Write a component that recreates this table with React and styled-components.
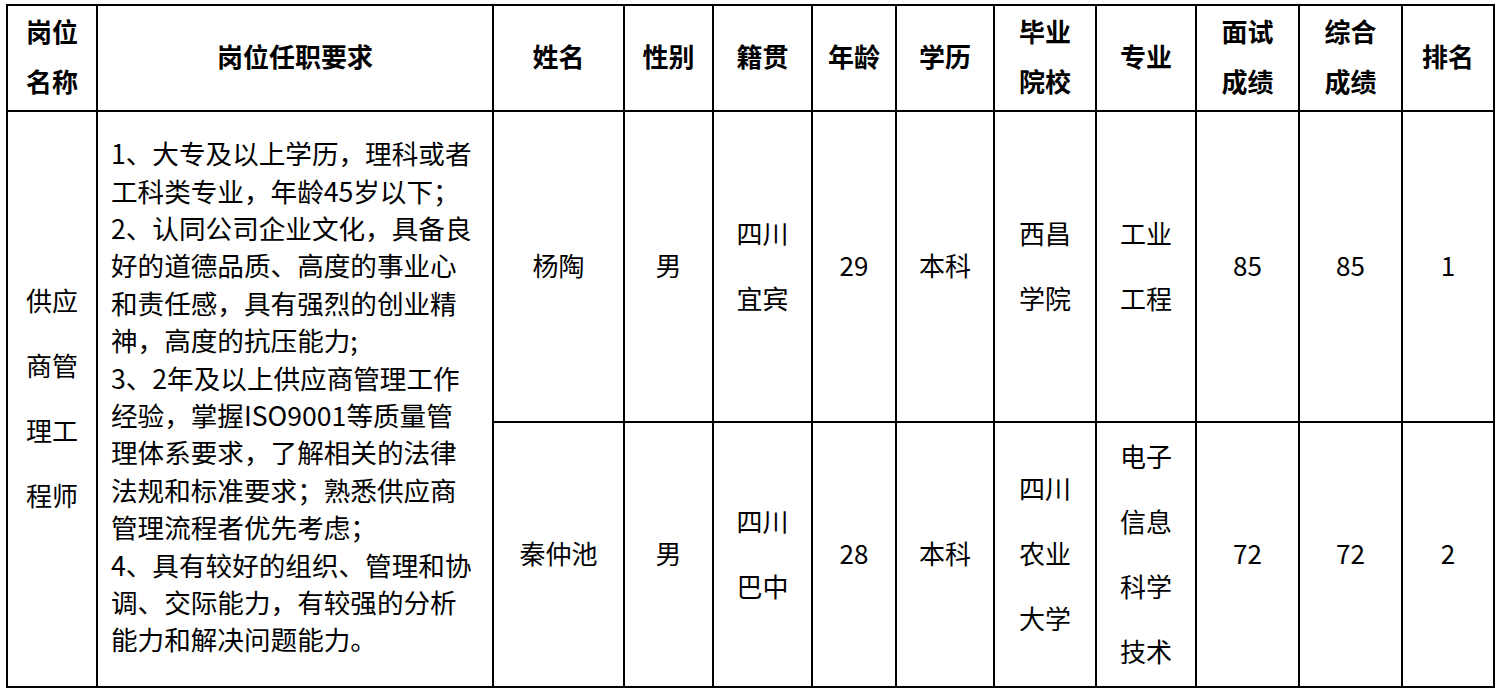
import styled, { createGlobalStyle } from "styled-components";

const GlobalStyle = createGlobalStyle`
  body {
    margin: 0;
    background: #fff;
    color: #000;
    font-family: "Noto Sans CJK SC", "Microsoft YaHei", sans-serif;
  }
`;

const columns = [88, 394, 129, 87, 97, 82, 96, 100, 98, 101, 101, 90];

const headers = [
  ["岗位", "名称"],
  ["岗位任职要求"],
  ["姓名"],
  ["性别"],
  ["籍贯"],
  ["年龄"],
  ["学历"],
  ["毕业", "院校"],
  ["专业"],
  ["面试", "成绩"],
  ["综合", "成绩"],
  ["排名"],
];

const requirements = [
  "1、大专及以上学历，理科或者",
  "工科类专业，年龄45岁以下；",
  "2、认同公司企业文化，具备良",
  "好的道德品质、高度的事业心",
  "和责任感，具有强烈的创业精",
  "神，高度的抗压能力;",
  "3、2年及以上供应商管理工作",
  "经验，掌握ISO9001等质量管",
  "理体系要求，了解相关的法律",
  "法规和标准要求；熟悉供应商",
  "管理流程者优先考虑；",
  "4、具有较好的组织、管理和协",
  "调、交际能力，有较强的分析",
  "能力和解决问题能力。",
];

const people = [
  [["杨陶"], ["男"], ["四川", "宜宾"], ["29"], ["本科"], ["西昌", "学院"], ["工业", "工程"], ["85"], ["85"], ["1"]],
  [["秦仲池"], ["男"], ["四川", "巴中"], ["28"], ["本科"], ["四川", "农业", "大学"], ["电子", "信息", "科学", "技术"], ["72"], ["72"], ["2"]],
];

const Table = styled.div`
  display: grid;
  grid-template-columns: ${columns.map((c) => `${c}px`).join(" ")};
  grid-template-rows: 104px 309px 263px;
  gap: 2px;
  padding: 2px;
  background: #000;
  width: max-content;
  margin: 4px 0 0 6px;
`;

const Cell = styled.div`
  background: #fff;
  display: flex;
  flex-direction: column;
  justify-content: center;
  align-items: center;
  text-align: center;
  padding-bottom: 4px;
  font-size: 26px;
  line-height: ${(p) => (p.$head ? "50px" : "65px")};
  font-weight: ${(p) => (p.$head ? 700 : 400)};
  grid-row: ${(p) => (p.$span ? "span 2" : "auto")};
`;

const TextCell = styled(Cell)`
  align-items: flex-start;
  text-align: left;
  padding-left: 13px;
  padding-bottom: 6px;
  font-size: 26.6px;
  line-height: 37.4px;
`;

const Line = styled.span`
  display: block;
  white-space: nowrap;
`;

const Lines = ({ lines }) => lines.map((l, i) => <Line key={i}>{l}</Line>);

export default function App() {
  return (
    <>
      <GlobalStyle />
      <Table>
        {headers.map((h, i) => (
          <Cell $head key={i}>
            <Lines lines={h} />
          </Cell>
        ))}
        <Cell $span>
          <Lines lines={["供应", "商管", "理工", "程师"]} />
        </Cell>
        <TextCell $span>
          <Lines lines={requirements} />
        </TextCell>
        {people.map((row, r) =>
          row.map((c, i) => (
            <Cell key={`${r}-${i}`}>
              <Lines lines={c} />
            </Cell>
          ))
        )}
      </Table>
    </>
  );
}
